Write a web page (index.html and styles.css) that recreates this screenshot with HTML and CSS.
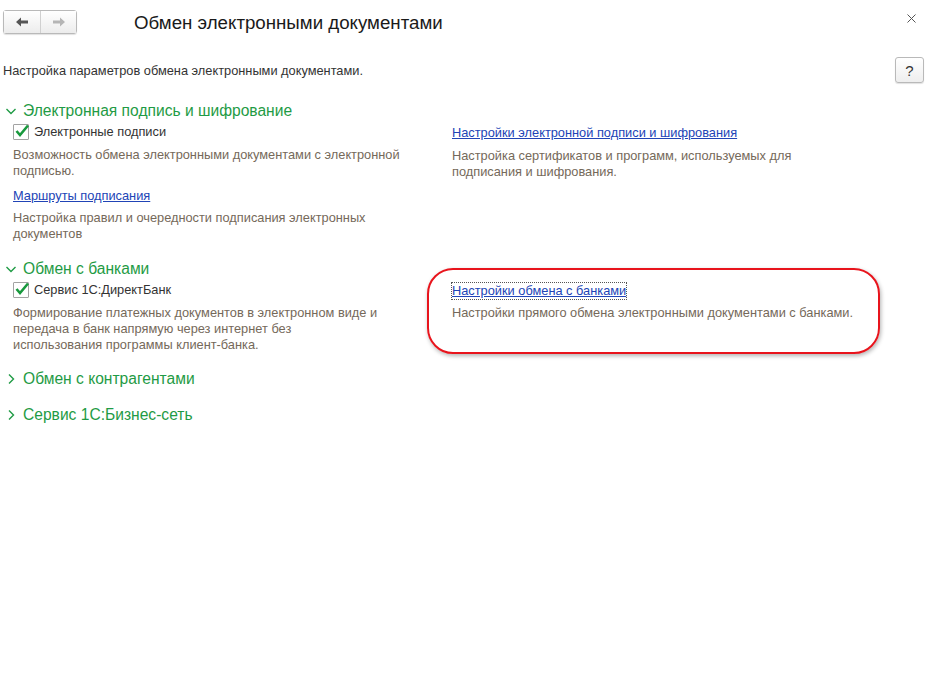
FILE: index.html
```html
<!DOCTYPE html>
<html lang="ru">
<head>
  <meta charset="UTF-8">
  <title>Обмен электронными документами</title>
  <link rel="stylesheet" href="styles.css">
</head>
<body>
  <div class="window">
    <div class="top-bar">
      <div class="nav-group">
        <button class="nav-btn">
          <svg width="14" height="10" viewBox="0 0 14 10"><path d="M1 5 L6 0.5 L6 3.5 L13 3.5 L13 6.5 L6 6.5 L6 9.5 Z" fill="#555"/></svg>
        </button>
        <button class="nav-btn">
          <svg width="14" height="10" viewBox="0 0 14 10"><path d="M13 5 L8 0.5 L8 3.5 L1 3.5 L1 6.5 L8 6.5 L8 9.5 Z" fill="#b5b5b5"/></svg>
        </button>
      </div>
      <div class="title">Обмен электронными документами</div>
      <div class="close">
        <svg width="9" height="9" viewBox="0 0 9 9"><path d="M0.5 0.5 L8.5 8.5 M8.5 0.5 L0.5 8.5" stroke="#555" stroke-width="1"/></svg>
      </div>
    </div>

    <div class="sub-bar">
      <div class="sub-text">Настройка параметров обмена электронными документами.</div>
      <button class="help-btn">?</button>
    </div>

    <!-- Электронная подпись -->
    <div class="group-head open">
      <svg class="chevron" width="12" height="12" viewBox="0 0 12 12"><path d="M1.5 4 L6 8.5 L10.5 4" fill="none" stroke="#1f9b45" stroke-width="1.4"/></svg>
      <span>Электронная подпись и шифрование</span>
    </div>
    <div class="group-body">
      <div class="col-left">
        <label class="check-row">
          <span class="checkbox">
            <svg width="16" height="14" viewBox="0 0 16 14"><path d="M2.5 7 L6 11 L14 1.5" fill="none" stroke="#18993d" stroke-width="2.6"/></svg>
          </span>
          Электронные подписи
        </label>
        <div class="note first">Возможность обмена электронными документами с электронной<br>подписью.</div>
        <a class="link block" href="#">Маршруты подписания</a>
        <div class="note">Настройка правил и очередности подписания электронных<br>документов</div>
      </div>
      <div class="col-right">
        <a class="link" href="#">Настройки электронной подписи и шифрования</a>
        <div class="note first">Настройка сертификатов и программ, используемых для<br>подписания и шифрования.</div>
      </div>
    </div>

    <!-- Обмен с банками -->
    <div class="group-head open second">
      <svg class="chevron" width="12" height="12" viewBox="0 0 12 12"><path d="M1.5 4 L6 8.5 L10.5 4" fill="none" stroke="#1f9b45" stroke-width="1.4"/></svg>
      <span>Обмен с банками</span>
    </div>
    <div class="group-body">
      <div class="col-left">
        <label class="check-row">
          <span class="checkbox">
            <svg width="16" height="14" viewBox="0 0 16 14"><path d="M2.5 7 L6 11 L14 1.5" fill="none" stroke="#18993d" stroke-width="2.6"/></svg>
          </span>
          Сервис 1С:ДиректБанк
        </label>
        <div class="note first">Формирование платежных документов в электронном виде и<br>передача в банк напрямую через интернет без<br>использования программы клиент-банка.</div>
      </div>
      <div class="col-right marked">
        <a class="link focused" href="#">Настройки обмена с банками</a>
        <div class="note tight">Настройки прямого обмена электронными документами с банками.</div>
        <div class="red-mark"></div>
      </div>
    </div>

    <div class="group-head closed">
      <svg class="chevron" width="12" height="12" viewBox="0 0 12 12"><path d="M4 1.5 L8.5 6 L4 10.5" fill="none" stroke="#1f9b45" stroke-width="1.4"/></svg>
      <span>Обмен с контрагентами</span>
    </div>
    <div class="group-head closed">
      <svg class="chevron" width="12" height="12" viewBox="0 0 12 12"><path d="M4 1.5 L8.5 6 L4 10.5" fill="none" stroke="#1f9b45" stroke-width="1.4"/></svg>
      <span>Сервис 1С:Бизнес-сеть</span>
    </div>
  </div>
</body>
</html>
```

FILE: styles.css
```css
/* Общие стили */
body {
  margin: 0;
  background-color: #ffffff;
  font-family: "Liberation Sans", Arial, sans-serif;
  font-size: 12.8px;
  color: #333333;
}
.window {
  width: 934px;
  height: 676px;
  padding: 10px 0 0 3px;
  box-sizing: border-box;
}

/* Заголовок окна */
.top-bar {
  display: flex;
  align-items: center;
  height: 24px;
}
.nav-group {
  display: flex;
  border: 1px solid #b9b9b9;
  border-radius: 3px;
  box-shadow: 0 1px 1px rgba(0, 0, 0, 0.12);
}
.nav-btn {
  width: 36px;
  height: 22px;
  border: none;
  padding: 0;
  background: linear-gradient(#ffffff, #ececec);
  display: flex;
  align-items: center;
  justify-content: center;
}
.nav-btn + .nav-btn {
  border-left: 1px solid #d0d0d0;
}
.title {
  margin-left: 57px;
  margin-top: 2px;
  font-size: 18.7px;
  color: #1a1a1a;
}
.close {
  margin-left: auto;
  margin-right: 18px;
  margin-top: -8px;
  display: flex;
}

.sub-bar {
  display: flex;
  align-items: center;
  margin-top: 23px;
  height: 26px;
}
.sub-text {
  color: #333333;
  margin-top: 1px;
}
.help-btn {
  margin-left: auto;
  margin-right: 10px;
  width: 29px;
  height: 26px;
  border: 1px solid #b9b9b9;
  border-radius: 3px;
  background: linear-gradient(#ffffff, #eeeeee);
  box-shadow: 0 1px 1px rgba(0, 0, 0, 0.12);
  font-family: "Liberation Sans", Arial, sans-serif;
  font-size: 15px;
  color: #333333;
  padding: 0;
}

/* Группы */
.group-head {
  display: flex;
  align-items: center;
  height: 20px;
  margin-top: 16px;
  font-size: 15.6px;
  color: #1f9b45;
}
.group-head.open {
  margin-top: 18px;
}
.group-head.second {
  margin-top: 17px;
}
.chevron {
  margin-left: 2px;
  margin-right: 6px;
}
.group-body {
  display: flex;
  margin-top: 3px;
}
.col-left {
  width: 439px;
  padding-left: 10px;
}
.col-right {
  position: relative;
  padding-top: 1px;
}
.check-row {
  display: flex;
  align-items: center;
  height: 16px;
  line-height: 16px;
}
.checkbox {
  width: 14px;
  height: 14px;
  border: 1px solid #a3a3a3;
  border-radius: 1px;
  background: #ffffff;
  margin-right: 5px;
  position: relative;
}
.checkbox svg {
  position: absolute;
  left: 0;
  top: -1px;
}
.note {
  color: #75695a;
  line-height: 16px;
  margin-top: 6px;
}
.note.first {
  margin-top: 7px;
}
.note.tight {
  margin-top: 6px;
}
.link {
  color: #2144b6;
  text-decoration: underline;
  line-height: 16px;
  display: inline-block;
}
.link.block {
  display: block;
  width: max-content;
  margin-top: 9px;
}
.link.focused {
  outline: 1px dotted #555555;
  outline-offset: 0;
}

/* Красная пометка поверх содержимого */
.red-mark {
  position: absolute;
  left: -25px;
  top: -14px;
  width: 449px;
  height: 82px;
  border: 2px solid #e8141c;
  border-radius: 26px;
  box-shadow: 1px 2px 4px rgba(0, 0, 0, 0.3);
}
```
